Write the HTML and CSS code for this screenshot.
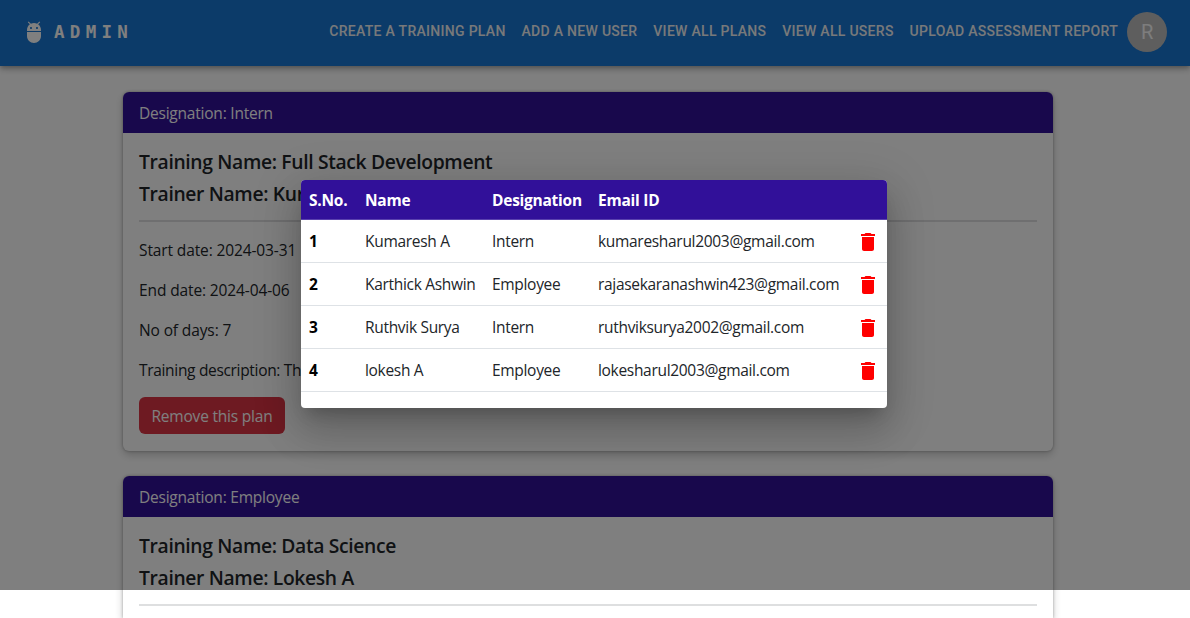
FILE: index.html
```
<!DOCTYPE html>
<html lang="en">
<head>
<meta charset="utf-8">
<title>Admin</title>
<link rel="stylesheet" href="styles.css">
</head>
<body>
<svg class="sprite" aria-hidden="true">
  <symbol id="trash" viewBox="0 0 24 24"><path d="M6 19c0 1.1.9 2 2 2h8c1.100 0 2-.9 2-2V7H6v12zM19 4h-3.500l-1-1h-5l-1 1H5v2h14V4z"/></symbol>
</svg>
<header class="appbar">
  <svg class="logo" viewBox="0 0 24 24"><path d="M5 16c0 3.870 3.130 7 7 7s7-3.130 7-7v-4H5v4zM16.120 4.370l2.100-2.100-.82-.83-2.300 2.310C14.160 3.280 13.120 3 12 3s-2.160.28-3.090.75L6.600 1.440l-.82.83 2.100 2.100C6.140 5.640 5 7.680 5 10v1h14v-1c0-2.320-1.140-4.360-2.880-5.630zM9 9c-.55 0-1-.45-1-1s.45-1 1-1 1 .45 1 1-.45 1-1 1zm6 0c-.55 0-1-.45-1-1s.45-1 1-1 1 .45 1 1-.45 1-1 1z"/></svg>
  <span class="brand">ADMIN</span>
  <nav class="nav">
    <a>CREATE A TRAINING PLAN</a>
    <a>ADD A NEW USER</a>
    <a>VIEW ALL PLANS</a>
    <a>VIEW ALL USERS</a>
    <a>UPLOAD ASSESSMENT REPORT</a>
  </nav>
  <span class="avatar">R</span>
</header>
<main class="plans">
  <section class="card">
    <div class="card-header">Designation: Intern</div>
    <div class="card-body">
      <h5>Training Name: Full Stack Development</h5>
      <h5>Trainer Name: Kur</h5>
      <hr>
      <p>Start date: 2024-03-31</p>
      <p>End date: 2024-04-06</p>
      <p>No of days: 7</p>
      <p class="description">Training description: Th</p>
      <button class="remove">Remove this plan</button>
    </div>
  </section>
  <section class="card last">
    <div class="card-header">Designation: Employee</div>
    <div class="card-body">
      <h5>Training Name: Data Science</h5>
      <h5>Trainer Name: Lokesh A</h5>
      <hr>
    </div>
  </section>
</main>
<div class="backdrop">
  <div class="dialog">
    <div class="row head"><b>S.No.</b><b>Name</b><b>Designation</b><b>Email ID</b></div>
    <div class="row"><b>1</b><span>Kumaresh A</span><span>Intern</span><span>kumaresharul2003@gmail.com</span><svg><use href="#trash"/></svg></div>
    <div class="row"><b>2</b><span>Karthick Ashwin</span><span>Employee</span><span>rajasekaranashwin423@gmail.com</span><svg><use href="#trash"/></svg></div>
    <div class="row"><b>3</b><span>Ruthvik Surya</span><span>Intern</span><span>ruthviksurya2002@gmail.com</span><svg><use href="#trash"/></svg></div>
    <div class="row"><b>4</b><span>lokesh A</span><span>Employee</span><span>lokesharul2003@gmail.com</span><svg><use href="#trash"/></svg></div>
  </div>
</div>
</body>
</html>
```
FILE: styles.css
```
* { box-sizing: border-box; }
html, body { height: 618px; overflow: hidden; }
body { margin: 0; background: #fff; color: #212529; font: 15.5px/24px "Open Sans", "Noto Sans", sans-serif; letter-spacing: -0.31px; }
.sprite { position: absolute; width: 0; height: 0; }

.appbar { position: relative; display: flex; align-items: center; height: 66px; padding: 0 23px 0 24px; background: #1976d2; color: #fff; box-shadow: 0 2px 4px -1px rgba(0,0,0,.2), 0 4px 5px rgba(0,0,0,.14), 0 1px 10px rgba(0,0,0,.12); }
.logo { width: 24px; height: 24px; margin: 0 6px 2px -2px; fill: #fff; }
.brand { font: 700 17.5px/24px "DejaVu Sans Mono", monospace; letter-spacing: 5.3px; margin: 0 0 2px 2px; }
.nav { display: flex; gap: 15.9px; margin: 0 9px 4px auto; color: #f0f2f5; font: 500 14px/24px Roboto, sans-serif; letter-spacing: .29px; white-space: nowrap; }
.avatar { display: flex; align-items: center; justify-content: center; width: 40px; height: 40px; border-radius: 50%; background: #bdbdbd; color: #fafafa; font: 400 20px/20px Roboto, sans-serif; margin-bottom: 2px; }

.plans { width: 930px; height: 526px; margin: 26px 0 0 123px; display: flex; flex-direction: column; gap: 25px; }
.card { height: 359px; border-radius: 6px; background: #fff; box-shadow: 0 4px 8px rgba(0,0,0,.2), 0 0 3px rgba(0,0,0,.3); flex: none; }
.card.last { height: 142px; border-radius: 6px 6px 0 0; }
.card-header { height: 41px; padding: 9px 16px 8px; border-radius: 6px 6px 0 0; background: #311099; color: #fff; letter-spacing: -.22px; }
.card-body { padding: 17px 16px 0; }
h5 { margin: 0 0 8px; font-size: 19.3px; line-height: 24px; font-weight: 600; letter-spacing: -.34px; }
hr { margin: 14px 0 16px; border: 0; border-top: 2px solid #dedfe0; }
p { margin: 0 0 16px; letter-spacing: -.12px; }
.description { margin-bottom: 15px; letter-spacing: -.32px; }
.remove { display: block; width: 146px; height: 37px; padding: 0; border: 0; border-radius: 6px; background: #dc3545; color: #fff; font: inherit; letter-spacing: -.2px; }

.backdrop { position: absolute; top: 0; left: 0; width: 1190px; height: 590px; background: rgba(0,0,0,.5); padding: 180px 303px 0 301px; }
.dialog { height: 228px; border-radius: 4px; overflow: hidden; background: #fff; box-shadow: 0 11px 15px -7px rgba(0,0,0,.2), 0 24px 38px 3px rgba(0,0,0,.14), 0 9px 46px 8px rgba(0,0,0,.12); }
.row { display: grid; grid-template-columns: 56px 127px 106px 258px 1fr; height: 43px; padding: 9px 0 0 8px; border-bottom: 1px solid #dee2e6; white-space: nowrap; }
.row b { color: #000; }
.row svg { width: 24px; height: 24px; margin: 1px 0 0 -.5px; fill: red; }
.head { height: 40px; padding-top: 8px; background: #311099; border-color: #5a41ae; }
.row.head b { color: #fff; letter-spacing: -.25px; }
```
